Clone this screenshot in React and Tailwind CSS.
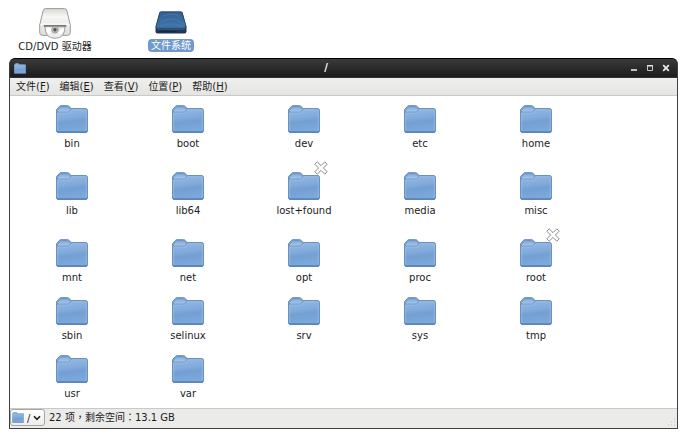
import { useState } from 'react';

const folders = [
  { name: 'bin' },
  { name: 'boot' },
  { name: 'dev' },
  { name: 'etc' },
  { name: 'home' },
  { name: 'lib' },
  { name: 'lib64' },
  { name: 'lost+found', locked: true },
  { name: 'media' },
  { name: 'misc' },
  { name: 'mnt' },
  { name: 'net' },
  { name: 'opt' },
  { name: 'proc' },
  { name: 'root', locked: true },
  { name: 'sbin' },
  { name: 'selinux' },
  { name: 'srv' },
  { name: 'sys' },
  { name: 'tmp' },
  { name: 'usr' },
  { name: 'var' },
];

const menus = [
  { label: '文件', accessKey: 'F' },
  { label: '编辑', accessKey: 'E' },
  { label: '查看', accessKey: 'V' },
  { label: '位置', accessKey: 'P' },
  { label: '帮助', accessKey: 'H' },
];

// Gradients shared by every folder icon
const FolderDefs = () => (
  <svg className="absolute h-0 w-0" aria-hidden="true">
    <defs>
      <linearGradient id="folder-body" x1="0" y1="0" x2="0.15" y2="1">
        <stop offset="0" stopColor="#9abde6" />
        <stop offset="0.5" stopColor="#82abdb" />
        <stop offset="0.65" stopColor="#739fd3" />
        <stop offset="1" stopColor="#7ca9dc" />
      </linearGradient>
      <linearGradient id="folder-tab" x1="0" y1="0" x2="0" y2="1">
        <stop offset="0" stopColor="#7fa8d8" />
        <stop offset="1" stopColor="#a9c9ee" />
      </linearGradient>
    </defs>
  </svg>
);

const FolderIcon = ({ className }) => (
  <svg viewBox="0 0 32 28" className={className} aria-hidden="true">
    <path d="M.6 6V4.6L3.4 1.4Q4 .7 5 .7H11.6Q12.6 .7 13.2 1.4L15 3.6H29.8Q31.4 3.6 31.4 5.2V26Q31.4 27.4 30 27.4H2Q.6 27.4 .6 26Z" fill="url(#folder-body)" stroke="#6288b8" strokeWidth="1" />
    <path d="M1.2 5.6L4 2.2Q4.5 1.6 5.2 1.6H11.4Q12.2 1.6 12.7 2.2L14.8 4.7L13.4 6.5Q13 7.1 12.2 7.1H1.5Z" fill="url(#folder-tab)" stroke="#668ebf" strokeWidth="0.9" />
    <path d="M1.7 25.5V8H13Q13.8 8 14.3 7.2L15.9 4.8H29.6Q30.3 4.8 30.3 5.6V25.5" fill="none" stroke="#a3c3e9" strokeWidth="0.6" />
    <path d="M1.2 26.9H30.8" stroke="#5079ad" strokeWidth="1" />
  </svg>
);

const NoAccessEmblem = () => (
  <svg viewBox="0 0 14 14" className="absolute -top-[11px] -right-2 h-3.5 w-3.5" aria-hidden="true">
    <path d="M3.2 .8L7 4.6L10.8 .8L13.2 3.2L9.4 7L13.2 10.8L10.8 13.2L7 9.4L3.2 13.2L.8 10.8L4.6 7L.8 3.2Z" fill="#fcfcfc" stroke="#8c8c8c" strokeWidth="1" strokeLinejoin="round" />
  </svg>
);

const OpticalDriveIcon = () => (
  <svg viewBox="0 0 32 31" className="h-[31px] w-8" aria-hidden="true">
    <defs>
      <linearGradient id="drive-top" x1="0" y1="0" x2="0" y2="1">
        <stop offset="0" stopColor="#d7d7d4" />
        <stop offset="0.3" stopColor="#f6f6f5" />
        <stop offset="1" stopColor="#dededb" />
      </linearGradient>
    </defs>
    <path d="M4.2 2.4Q4.7 .6 6.6 .6H25.4Q27.3 .6 27.8 2.4L31.3 17V24.5Q31.3 27.4 28.4 27.4H3.6Q.7 27.4 .7 24.5V17Z" fill="url(#drive-top)" stroke="#9a9a97" strokeWidth="1" />
    <path d="M1.2 17.2Q2 16 4 16H28Q30 16 30.8 17.2" fill="none" stroke="#fff" />
    <path d="M4.8 17H27.2V19H4.8Z" fill="#777" />
    <path d="M6 18.8H26Q26 30.3 16 30.3T6 18.8Z" fill="#ededed" stroke="#999" strokeWidth="0.9" />
    <path d="M7 19.4H14L10 27Q7 24.5 7 19.4ZM18 24.5L25 20Q24.5 24 22 26.5Z" fill="#fff" />
    <circle cx="16" cy="21.8" r="3.4" fill="#bbb" stroke="#999" strokeWidth="0.7" />
    <circle cx="16" cy="21.8" r="1.7" fill="#555" />
  </svg>
);

const HardDiskIcon = () => (
  <svg viewBox="0 0 32 23" className="h-[23px] w-8" aria-hidden="true">
    <defs>
      <linearGradient id="disk-top" x1="0" y1="0" x2="0.2" y2="1">
        <stop offset="0" stopColor="#315f94" />
        <stop offset="1" stopColor="#4074aa" />
      </linearGradient>
    </defs>
    <path d="M4.4 1.6Q4.9 .4 6.2 .4H25.8Q27.1 .4 27.6 1.6L31.5 16V20.5Q31.5 22.5 29.5 22.5H2.5Q.5 22.5 .5 20.5V16Z" fill="#1f3955" />
    <path d="M4.9 2Q5.3 1 6.4 1H25.6Q26.7 1 27.1 2L31 15.4Q31 17.2 29.4 17.2H2.6Q1 17.2 1 15.4Z" fill="url(#disk-top)" stroke="#254b77" strokeWidth="0.8" />
    <path d="M8 5Q16 1 24 5M6 11Q15 5 24 10T29 12M5 15Q15 11 27 15" fill="none" stroke="#4c7db1" strokeWidth="0.7" />
    <path d="M2 18.2H30" stroke="#4a6b90" strokeWidth="0.7" />
    <path d="M4 20.5H22" stroke="#14283e" strokeWidth="1" />
  </svg>
);

const TitleBar = () => (
  <header className="flex h-[19px] items-center rounded-t-[5px] border-b border-[#30323f] bg-linear-to-b from-[#3b3b3b] via-[#2b2b2b] to-[#1c1c1c] pr-[3px] pl-1">
    <FolderIcon className="h-[11px] w-3" />
    <h1 className="flex-1 text-center font-bold text-white">/</h1>
    <div className="flex">
      <button aria-label="最小化" className="flex h-4 w-4 items-center justify-center">
        <svg viewBox="0 0 8 8" className="h-2 w-2"><path d="M1 6H7" stroke="#e8e8e8" strokeWidth="1.6" /></svg>
      </button>
      <button aria-label="最大化" className="flex h-4 w-4 items-center justify-center">
        <svg viewBox="0 0 8 8" className="h-2 w-2"><path d="M1.5 2H6.5V6.5H1.5Z" fill="none" stroke="#c4c4c4" /><path d="M1 1.6H7" stroke="#e0e0e0" strokeWidth="1.2" /></svg>
      </button>
      <button aria-label="关闭" className="flex h-4 w-4 items-center justify-center">
        <svg viewBox="0 0 8 8" className="h-2 w-2"><path d="M1.2 1.2L6.8 6.8M6.8 1.2L1.2 6.8" stroke="#e8e8e8" strokeWidth="1.8" /></svg>
      </button>
    </div>
  </header>
);

const App = () => {
  const [location, setLocation] = useState('/');

  return (
    <div className="flex min-h-screen flex-col bg-white px-[9px] pt-2 pb-[10px] font-['DejaVu_Sans','Noto_Sans_CJK_SC',sans-serif] text-[10px] leading-[14px] text-[#1c1c1c]">
      <FolderDefs />

      {/* Desktop */}
      <div className="flex h-[50px]">
        <button className="flex w-23 flex-col items-center whitespace-nowrap">
          <OpticalDriveIcon />
          <span className="mt-px">CD/DVD 驱动器</span>
        </button>
        <button className="ml-6 flex w-23 flex-col items-center pt-[3px]">
          <HardDiskIcon />
          <span className="mt-[5px] rounded-[4px] bg-[#7099cc] px-[3px] leading-[13px] text-white">文件系统</span>
        </button>
      </div>

      {/* File manager window */}
      <main className="mr-[2px] flex flex-1 flex-col rounded-t-md border border-[#404040] border-t-black bg-[#1c1c1c]">
        <TitleBar />

        <nav className="flex h-[18px] items-center gap-[10px] border-b border-[#c9c9c7] bg-linear-to-b from-[#efefed] to-[#e4e4e2] px-[6px]">
          {menus.map((menu) => (
            <button key={menu.accessKey} className="whitespace-nowrap">
              {menu.label}(<span className="underline">{menu.accessKey}</span>)
            </button>
          ))}
        </nav>

        <ul className="grid flex-1 grid-cols-[repeat(auto-fill,116px)] content-start items-end gap-y-3 bg-white px-1 pt-[9px] pb-1">
          {folders.map((folder) => (
            <li key={folder.name} className={folder.locked ? 'flex justify-center pt-[9px]' : 'flex justify-center'}>
              <button className="flex flex-col items-center gap-1">
                <span className="relative">
                  <FolderIcon className="h-7 w-8" />
                  {folder.locked && <NoAccessEmblem />}
                </span>
                {folder.name}
              </button>
            </li>
          ))}
        </ul>

        <footer className="flex h-5 items-start gap-1 border-t border-[#c9c9c7] bg-[#ebebea] leading-[17px]">
          <div className="relative">
            <FolderIcon className="pointer-events-none absolute top-[3px] left-[2px] h-[11px] w-3" />
            <select
              aria-label="位置"
              value={location}
              onChange={(e) => setLocation(e.target.value)}
              className="block h-[17px] w-[35px] appearance-none rounded-[3px] border border-[#a5a5a3] bg-linear-to-b from-white to-[#ededec] pl-4"
            >
              <option value="/">/</option>
            </select>
            <svg viewBox="0 0 8 6" className="pointer-events-none absolute top-[6px] right-1 h-[6px] w-2" aria-hidden="true">
              <path d="M1 1.2L4 4.4L7 1.2" fill="none" stroke="#222" strokeWidth="1.6" />
            </svg>
          </div>
          <p className="flex-1 font-['DejaVu_Sans','Noto_Sans_CJK_TC',sans-serif]">22 项，剩余空间：13.1 GB</p>
          <svg viewBox="0 0 10 10" className="mr-px h-[10px] w-[10px] self-end" aria-hidden="true">
            <path d="M8 1H9M5 4H6M8 4H9M2 7H3M5 7H6M8 7H9" stroke="#cfcfcd" strokeWidth="1.4" />
          </svg>
        </footer>
      </main>
    </div>
  );
};

export default App;
